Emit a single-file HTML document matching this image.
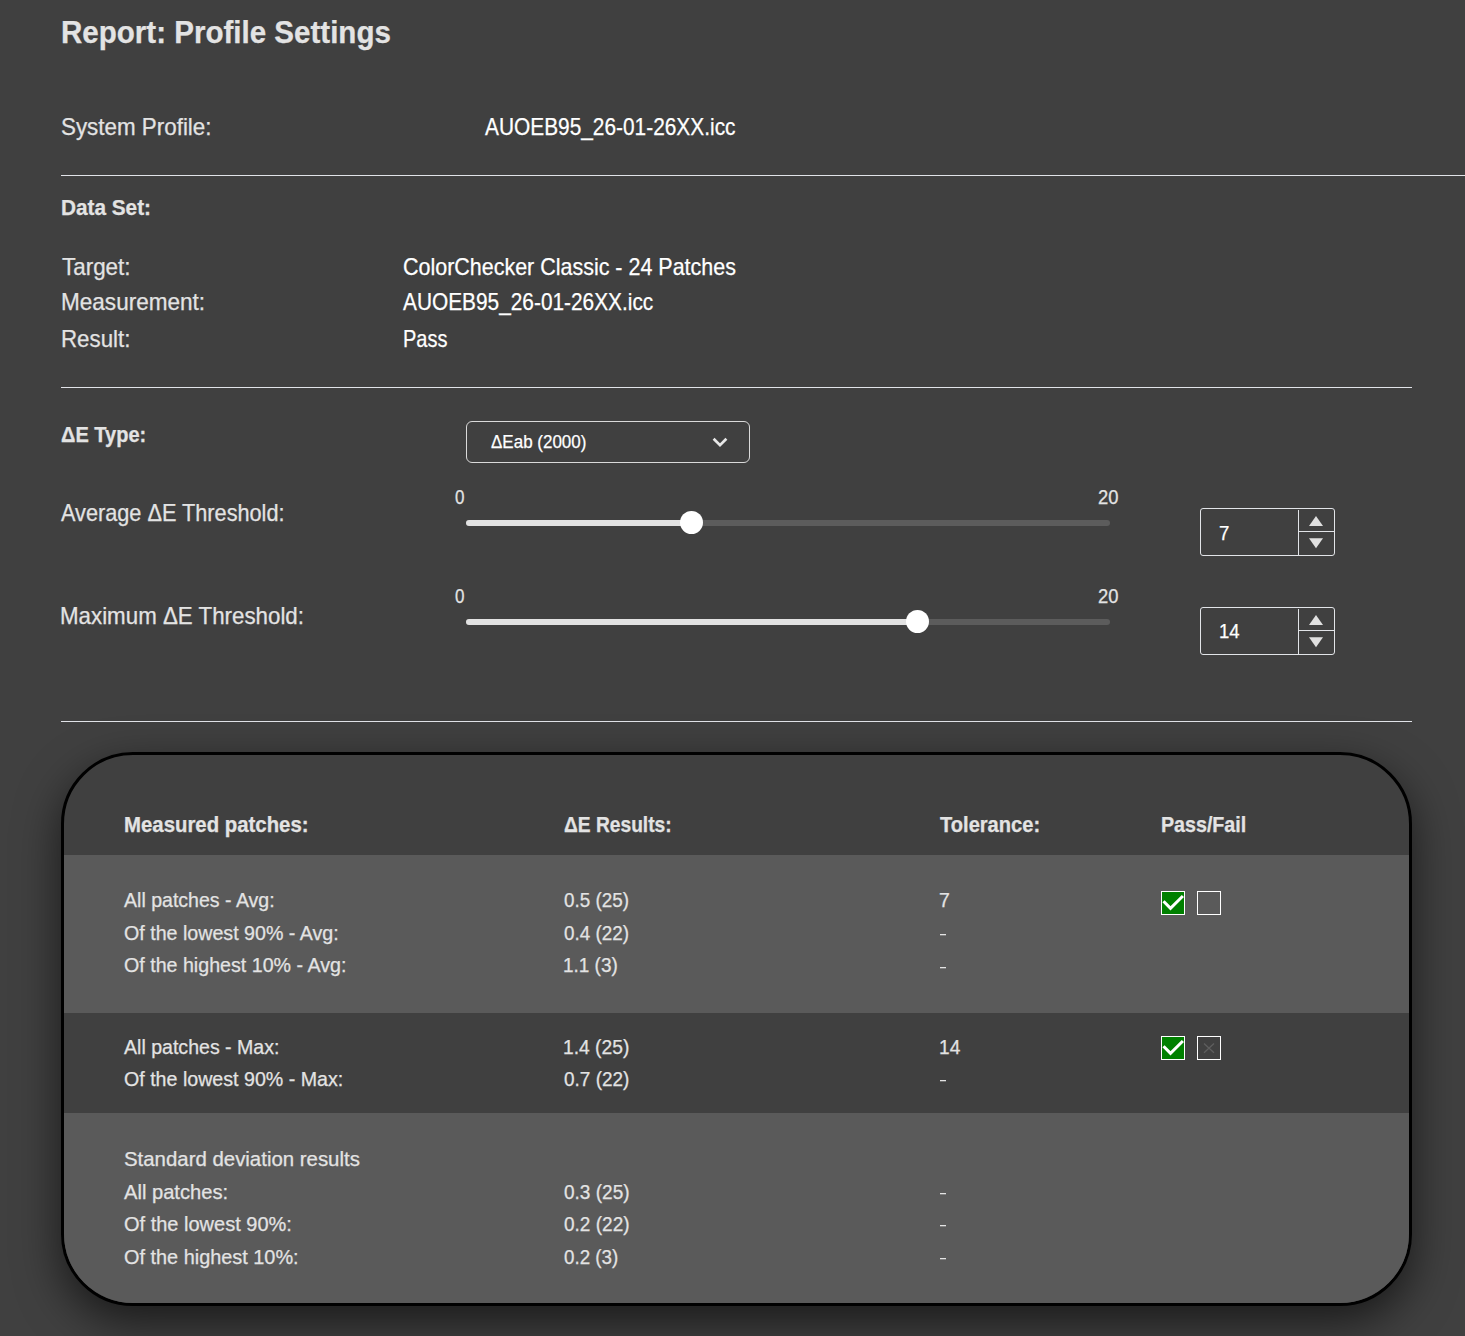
<!DOCTYPE html>
<html><head><meta charset="utf-8">
<style>
html,body{margin:0;padding:0;}
body{width:1465px;height:1336px;background:#404040;position:relative;overflow:hidden;font-family:"Liberation Sans",sans-serif;}
.t{position:absolute;white-space:nowrap;transform-origin:0 0;-webkit-text-stroke:0.25px currentColor;}
.hr{position:absolute;height:1px;background:#e1e3e8;}
.card{position:absolute;left:61px;top:752px;width:1345px;height:548px;border:3px solid #000;border-radius:72px;overflow:hidden;background:#404040;box-shadow:0 16px 45px rgba(0,0,0,0.6);}
.row{position:absolute;left:0;width:100%;}
.dd{position:absolute;left:466px;top:421px;width:282px;height:40px;border:1px solid #dadada;border-radius:6px;}
.track{position:absolute;height:6px;border-radius:3px;background:#5c5c5c;}
.fill{position:absolute;height:6px;border-radius:3px;background:#e2e2e2;}
.thumb{position:absolute;width:23px;height:23px;border-radius:50%;background:#fff;}
.spin{position:absolute;left:1200px;width:133px;height:46px;border:1px solid #e2e4e8;border-radius:3px;}
.cb{position:absolute;width:22px;height:22px;border:1px solid #fff;}
</style></head><body>
<div class="hr" style="left:61px;top:175px;width:1404px"></div>
<div class="hr" style="left:61px;top:387px;width:1351px"></div>
<div class="hr" style="left:61px;top:721px;width:1351px"></div>

<div class="dd"></div>
<svg style="position:absolute;left:0;top:0" width="1465" height="1336" viewBox="0 0 1465 1336">
  <polyline points="713.6,438.8 720,445.2 726.4,438.8" fill="none" stroke="#e8e8e8" stroke-width="2.7"/>
</svg>

<div class="track" style="left:466px;top:520px;width:644px"></div>
<div class="fill" style="left:466px;top:520px;width:226px"></div>
<div class="thumb" style="left:680px;top:511px"></div>

<div class="track" style="left:466px;top:619px;width:644px"></div>
<div class="fill" style="left:466px;top:619px;width:451px"></div>
<div class="thumb" style="left:905.5px;top:610px"></div>

<div class="spin" style="top:508px"></div>
<div class="spin" style="top:607px"></div>

<div class="card">
  <div class="row" style="top:100px;height:158px;background:#5a5a5a"></div>
  <div class="row" style="top:258px;height:100px;background:#404040"></div>
  <div class="row" style="top:358px;height:200px;background:#5a5a5a"></div>
</div>

<div class="cb" style="left:1161px;top:891px;background:#008000"></div>
<div class="cb" style="left:1197px;top:891px"></div>
<div class="cb" style="left:1161px;top:1036px;background:#008000"></div>
<div class="cb" style="left:1197px;top:1036px"></div>

<svg style="position:absolute;left:0;top:0" width="1465" height="1336" viewBox="0 0 1465 1336">
  <line x1="1298.5" y1="510" x2="1298.5" y2="555" stroke="#e2e4e8" stroke-width="1"/>
  <line x1="1298" y1="531.5" x2="1334" y2="531.5" stroke="#e2e4e8" stroke-width="1"/>
  <polygon points="1316,516 1323,526 1309,526" fill="#e0e0e0"/>
  <polygon points="1309,538.3 1323,538.3 1316,548.3" fill="#e0e0e0"/>
  <line x1="1298.5" y1="609" x2="1298.5" y2="654" stroke="#e2e4e8" stroke-width="1"/>
  <line x1="1298" y1="630.5" x2="1334" y2="630.5" stroke="#e2e4e8" stroke-width="1"/>
  <polygon points="1316,615 1323,625 1309,625" fill="#e0e0e0"/>
  <polygon points="1309,637.3 1323,637.3 1316,647.3" fill="#e0e0e0"/>
  <polyline points="1163.5,901.2 1170.5,908.4 1182.9,896" fill="none" stroke="#fff" stroke-width="3"/>
  <polyline points="1163.5,1046.2 1170.5,1053.4 1182.9,1041" fill="none" stroke="#fff" stroke-width="3"/>
  <line x1="1204" y1="1043.4" x2="1214" y2="1052.7" stroke="#5e5e5e" stroke-width="1.3"/>
  <line x1="1214" y1="1043.4" x2="1204" y2="1052.7" stroke="#5e5e5e" stroke-width="1.3"/>
</svg>
<div class="t" style="left:60.86px;top:14.50px;font-size:30.5px;line-height:34px;font-weight:bold;color:#e3e3e3;transform:scaleX(0.9685)">Report: Profile Settings</div>
<div class="t" style="left:60.77px;top:113.10px;font-size:24px;line-height:27px;font-weight:normal;color:#e3e3e3;transform:scaleX(0.9325)">System Profile:</div>
<div class="t" style="left:485.30px;top:112.80px;font-size:24px;line-height:27px;font-weight:normal;color:#ffffff;transform:scaleX(0.8693)">AUOEB95_26-01-26XX.icc</div>
<div class="t" style="left:60.76px;top:194.50px;font-size:22px;line-height:25px;font-weight:bold;color:#e3e3e3;transform:scaleX(0.9438)">Data Set:</div>
<div class="t" style="left:62.00px;top:252.80px;font-size:24px;line-height:27px;font-weight:normal;color:#e3e3e3;transform:scaleX(0.9344)">Target:</div>
<div class="t" style="left:61.06px;top:288.30px;font-size:24px;line-height:27px;font-weight:normal;color:#e3e3e3;transform:scaleX(0.9394)">Measurement:</div>
<div class="t" style="left:61.07px;top:324.70px;font-size:24px;line-height:27px;font-weight:normal;color:#e3e3e3;transform:scaleX(0.9288)">Result:</div>
<div class="t" style="left:402.51px;top:252.80px;font-size:24px;line-height:27px;font-weight:normal;color:#ffffff;transform:scaleX(0.8945)">ColorChecker Classic - 24 Patches</div>
<div class="t" style="left:403.40px;top:288.30px;font-size:24px;line-height:27px;font-weight:normal;color:#ffffff;transform:scaleX(0.8686)">AUOEB95_26-01-26XX.icc</div>
<div class="t" style="left:402.57px;top:324.70px;font-size:24px;line-height:27px;font-weight:normal;color:#ffffff;transform:scaleX(0.8328)">Pass</div>
<div class="t" style="left:61.00px;top:421.50px;font-size:22px;line-height:25px;font-weight:bold;color:#e3e3e3;transform:scaleX(0.9099)">ΔE Type:</div>
<div class="t" style="left:491.40px;top:430.50px;font-size:18.3px;line-height:21px;font-weight:normal;color:#ffffff;transform:scaleX(0.9294)">ΔEab (2000)</div>
<div class="t" style="left:61.00px;top:498.50px;font-size:24px;line-height:27px;font-weight:normal;color:#e3e3e3;transform:scaleX(0.9039)">Average ΔE Threshold:</div>
<div class="t" style="left:60.07px;top:601.50px;font-size:24px;line-height:27px;font-weight:normal;color:#e3e3e3;transform:scaleX(0.9300)">Maximum ΔE Threshold:</div>
<div class="t" style="left:454.90px;top:486.00px;font-size:19.5px;line-height:22px;font-weight:normal;color:#e3e3e3;transform:scaleX(0.8727)">0</div>
<div class="t" style="left:1098.40px;top:485.50px;font-size:19.5px;line-height:22px;font-weight:normal;color:#e3e3e3;transform:scaleX(0.9430)">20</div>
<div class="t" style="left:454.90px;top:584.50px;font-size:19.5px;line-height:22px;font-weight:normal;color:#e3e3e3;transform:scaleX(0.8727)">0</div>
<div class="t" style="left:1098.40px;top:584.50px;font-size:19.5px;line-height:22px;font-weight:normal;color:#e3e3e3;transform:scaleX(0.9430)">20</div>
<div class="t" style="left:1219.07px;top:521.50px;font-size:20px;line-height:22px;font-weight:normal;color:#ffffff;transform:scaleX(0.9300)">7</div>
<div class="t" style="left:1219.47px;top:620.40px;font-size:20px;line-height:22px;font-weight:normal;color:#ffffff;transform:scaleX(0.9279)">14</div>
<div class="t" style="left:123.55px;top:812.90px;font-size:21.5px;line-height:24px;font-weight:bold;color:#e3e3e3;transform:scaleX(0.9476)">Measured patches:</div>
<div class="t" style="left:563.50px;top:812.90px;font-size:21.5px;line-height:24px;font-weight:bold;color:#e3e3e3;transform:scaleX(0.8926)">ΔE Results:</div>
<div class="t" style="left:939.90px;top:812.90px;font-size:21.5px;line-height:24px;font-weight:bold;color:#e3e3e3;transform:scaleX(0.9342)">Tolerance:</div>
<div class="t" style="left:1160.79px;top:812.90px;font-size:21.5px;line-height:24px;font-weight:bold;color:#e3e3e3;transform:scaleX(0.9140)">Pass/Fail</div>
<div class="t" style="left:123.70px;top:888.30px;font-size:20.5px;line-height:23px;font-weight:normal;color:#e3e3e3;transform:scaleX(0.9533)">All patches - Avg:</div>
<div class="t" style="left:123.70px;top:921.10px;font-size:20.5px;line-height:23px;font-weight:normal;color:#e3e3e3;transform:scaleX(0.9578)">Of the lowest 90% - Avg:</div>
<div class="t" style="left:123.70px;top:953.30px;font-size:20.5px;line-height:23px;font-weight:normal;color:#e3e3e3;transform:scaleX(0.9580)">Of the highest 10% - Avg:</div>
<div class="t" style="left:564.00px;top:888.30px;font-size:20.5px;line-height:23px;font-weight:normal;color:#e3e3e3;transform:scaleX(0.9195)">0.5 (25)</div>
<div class="t" style="left:564.00px;top:921.10px;font-size:20.5px;line-height:23px;font-weight:normal;color:#e3e3e3;transform:scaleX(0.9195)">0.4 (22)</div>
<div class="t" style="left:563.08px;top:953.30px;font-size:20.5px;line-height:23px;font-weight:normal;color:#e3e3e3;transform:scaleX(0.9247)">1.1 (3)</div>
<div class="t" style="left:939.05px;top:888.30px;font-size:20.5px;line-height:23px;font-weight:normal;color:#e3e3e3;transform:scaleX(0.9500)">7</div>
<div style="position:absolute;left:940px;top:934px;width:6px;height:1px;background:#e3e3e3;box-shadow:0 1px 0 rgba(227,227,227,0.3)"></div>
<div style="position:absolute;left:940px;top:967px;width:6px;height:1px;background:#e3e3e3;box-shadow:0 1px 0 rgba(227,227,227,0.3)"></div>
<div class="t" style="left:124.00px;top:1034.90px;font-size:20.5px;line-height:23px;font-weight:normal;color:#e3e3e3;transform:scaleX(0.9540)">All patches - Max:</div>
<div class="t" style="left:124.00px;top:1066.80px;font-size:20.5px;line-height:23px;font-weight:normal;color:#e3e3e3;transform:scaleX(0.9573)">Of the lowest 90% - Max:</div>
<div class="t" style="left:563.26px;top:1034.90px;font-size:20.5px;line-height:23px;font-weight:normal;color:#e3e3e3;transform:scaleX(0.9386)">1.4 (25)</div>
<div class="t" style="left:564.20px;top:1066.80px;font-size:20.5px;line-height:23px;font-weight:normal;color:#e3e3e3;transform:scaleX(0.9252)">0.7 (22)</div>
<div class="t" style="left:939.07px;top:1034.90px;font-size:20.5px;line-height:23px;font-weight:normal;color:#e3e3e3;transform:scaleX(0.9345)">14</div>
<div style="position:absolute;left:940px;top:1080px;width:6px;height:1px;background:#e3e3e3;box-shadow:0 1px 0 rgba(227,227,227,0.3)"></div>
<div class="t" style="left:124.00px;top:1146.90px;font-size:20.5px;line-height:23px;font-weight:normal;color:#e3e3e3;transform:scaleX(0.9950)">Standard deviation results</div>
<div class="t" style="left:124.00px;top:1179.90px;font-size:20.5px;line-height:23px;font-weight:normal;color:#e3e3e3;transform:scaleX(0.9820)">All patches:</div>
<div class="t" style="left:124.00px;top:1211.90px;font-size:20.5px;line-height:23px;font-weight:normal;color:#e3e3e3;transform:scaleX(0.9756)">Of the lowest 90%:</div>
<div class="t" style="left:124.00px;top:1244.50px;font-size:20.5px;line-height:23px;font-weight:normal;color:#e3e3e3;transform:scaleX(0.9699)">Of the highest 10%:</div>
<div class="t" style="left:564.00px;top:1179.90px;font-size:20.5px;line-height:23px;font-weight:normal;color:#e3e3e3;transform:scaleX(0.9281)">0.3 (25)</div>
<div class="t" style="left:564.00px;top:1211.90px;font-size:20.5px;line-height:23px;font-weight:normal;color:#e3e3e3;transform:scaleX(0.9281)">0.2 (22)</div>
<div class="t" style="left:564.00px;top:1244.50px;font-size:20.5px;line-height:23px;font-weight:normal;color:#e3e3e3;transform:scaleX(0.9158)">0.2 (3)</div>
<div style="position:absolute;left:940px;top:1193px;width:6px;height:1px;background:#e3e3e3;box-shadow:0 1px 0 rgba(227,227,227,0.3)"></div>
<div style="position:absolute;left:940px;top:1225px;width:6px;height:1px;background:#e3e3e3;box-shadow:0 1px 0 rgba(227,227,227,0.3)"></div>
<div style="position:absolute;left:940px;top:1258px;width:6px;height:1px;background:#e3e3e3;box-shadow:0 1px 0 rgba(227,227,227,0.3)"></div>
</body></html>
